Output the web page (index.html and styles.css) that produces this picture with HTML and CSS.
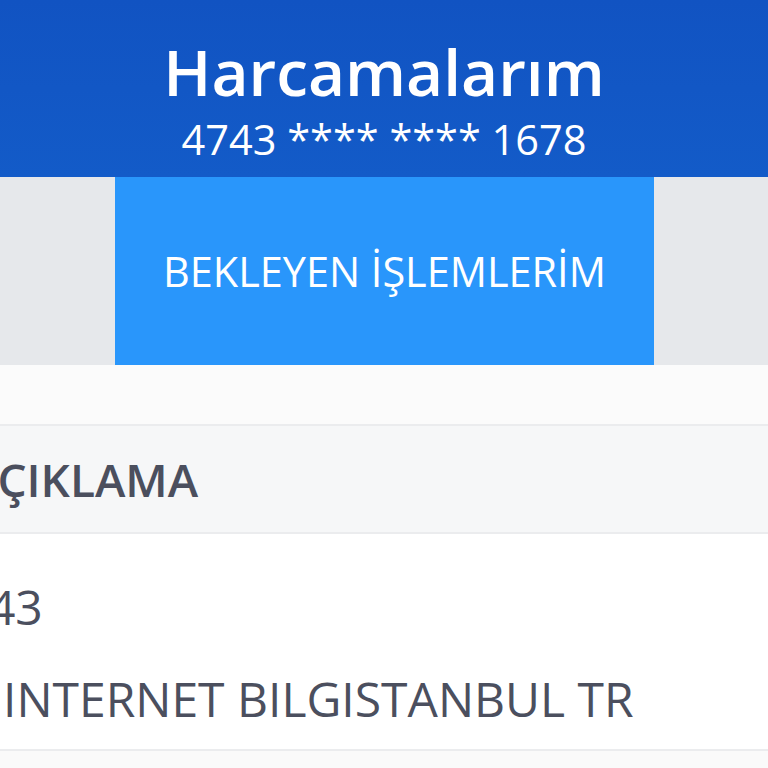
FILE: index.html
```html
<!DOCTYPE html>
<html lang="tr">
<head>
    <meta charset="UTF-8">
    <title>Harcamalarım</title>
    <link rel="stylesheet" href="styles.css">
</head>
<body>
    <div class="ust">
        <h1>Harcamalarım</h1>
        <p class="kartNo">4743 **** **** 1678</p>
    </div>

    <div class="sekmeler">
        <div class="sekme"></div>
        <div class="sekme aktif">BEKLEYEN İŞLEMLERİM</div>
        <div class="sekme"></div>
    </div>

    <div class="bosluk"></div>

    <div class="tablo">
        <div class="baslik"><span>AÇIKLAMA</span></div>
        <div class="satir">
            <p class="kart">4743</p>
            <p class="aciklama">INTERNET BILGISTANBUL TR</p>
        </div>
    </div>
</body>
</html>
```

FILE: styles.css
```css
body {
    margin: 0;
    font-family: "Open Sans", "Noto Sans", sans-serif;
    background-color: #fafafa;
    overflow: hidden;
}

p {
    margin: 0px;
    padding: 0px;
    white-space: nowrap;
}

.ust {
    height: 177px;
    background: linear-gradient(180deg, #1153c2, #135bc8);
    color: white;
    text-align: center;
    box-sizing: border-box;
    padding-top: 32px;
}

.ust h1 {
    margin: 0;
    font-size: 64px;
    font-weight: 600;
    line-height: 80px;
}

.kartNo {
    font-size: 41.5px;
    line-height: 48px;
    margin-top: 3px;
}

.sekmeler {
    display: flex;
    height: 188px;
    background-color: #e6e8eb;
}

.sekme {
    flex: 0 0 115px;
}

.sekme.aktif {
    flex: 0 0 539px;
    background-color: #2996fb;
    color: white;
    font-size: 41.4px;
    display: flex;
    align-items: center;
    justify-content: center;
}

.bosluk {
    height: 59px;
    background-color: #fbfbfb;
}

.tablo {
    white-space: nowrap;
}

.baslik {
    height: 106px;
    border-top: 2px solid #ebecee;
    border-bottom: 2px solid #ebecee;
    background-color: #f6f7f8;
    color: #4b4f5e;
    font-size: 46px;
    font-weight: 600;
    display: flex;
    align-items: center;
    padding-left: 3px;
}

.baslik span {
    margin-left: -36px;
}

.satir {
    background-color: white;
    height: 217px;
    border-bottom: 2px solid #ebecee;
    color: #4b4f5e;
    font-size: 48px;
    padding-top: 27px;
    padding-left: 3px;
    box-sizing: border-box;
}

.satir p {
    line-height: 92px;
}

.kart {
    margin-left: -70px;
}
```
